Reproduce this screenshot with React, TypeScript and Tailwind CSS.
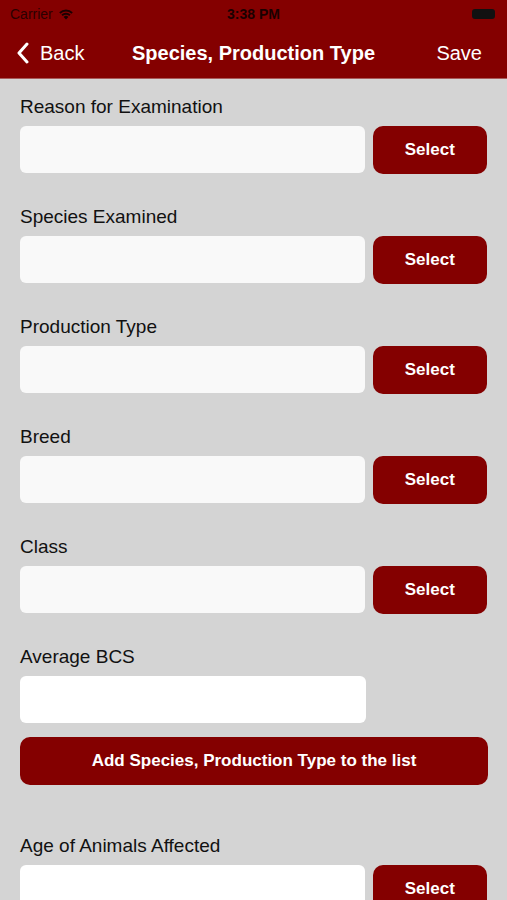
const fields = [
  { label: "Reason for Examination", select: true },
  { label: "Species Examined", select: true },
  { label: "Production Type", select: true },
  { label: "Breed", select: true },
  { label: "Class", select: true },
];

const Field = ({ label, select, white }: { label: string; select: boolean; white?: boolean }) => (
  <div>
    <p className="text-[19px] leading-[22px] text-[#111]">{label}</p>
    <div className="flex gap-[8px] mt-[8px] h-[48px]">
      <div className={`w-[346px] h-[47px] rounded-[6px] ${white ? "bg-white" : "bg-[#f9f9f9]"}`} />
      {select && (
        <button className="w-[115px] h-[48px] rounded-[10px] bg-[#840000] text-white font-bold text-[17px]">
          Select
        </button>
      )}
    </div>
  </div>
);

const App = () => {
  return (
    <div className="w-[507px] h-[900px] overflow-hidden bg-[#d4d4d4]" style={{ fontFamily: '"Liberation Sans", Arial, sans-serif' }}>
      <div className="bg-[#840000] border-b border-[#a85a5a]">
        <div className="h-[28px] flex items-center justify-between px-[10px] relative">
          <div className="flex items-center gap-[5px] text-[#2a0000] text-[14px]">
            <span>Carrier</span>
            <svg width="16" height="12" viewBox="0 0 16 12" fill="#1a0000">
              <path d="M8 11.5 L5.6 8.9 A3.4 3.4 0 0 1 10.4 8.9 Z" />
              <path d="M3.4 6.6 A6.6 6.6 0 0 1 12.6 6.6 L11.3 8 A4.7 4.7 0 0 0 4.7 8 Z" />
              <path d="M1.2 4.3 A9.8 9.8 0 0 1 14.8 4.3 L13.5 5.7 A7.9 7.9 0 0 0 2.5 5.7 Z" />
            </svg>
          </div>
          <span className="absolute left-1/2 -translate-x-1/2 text-[#1a0000] text-[14px] font-bold">3:38 PM</span>
          <div className="w-[23px] h-[10px] rounded-[3px] bg-[#111] mr-[2px]" />
        </div>
        <div className="h-[50px] flex items-center justify-between px-[16px] relative text-white text-[20px]">
          <div className="flex items-center gap-[10px]">
            <svg width="14" height="22" viewBox="0 0 14 22" fill="none" stroke="white" strokeWidth="3" strokeLinecap="round" strokeLinejoin="round">
              <path d="M11 2 L3 11 L11 20" />
            </svg>
            <span>Back</span>
          </div>
          <span className="absolute left-1/2 -translate-x-1/2 font-bold">Species, Production Type</span>
          <span className="mr-[9px]">Save</span>
        </div>
      </div>
      <div className="px-[20px] pt-[17px] flex flex-col gap-[32px]">
        {fields.map((f, idx) => (
          <Field key={idx} label={f.label} select={f.select} />
        ))}
        <div>
          <Field label="Average BCS" select={false} white />
          <button className="mt-[13px] w-[468px] h-[48px] rounded-[10px] bg-[#840000] text-white font-bold text-[17px]">
            Add Species, Production Type to the list
          </button>
        </div>
        <div className="mt-[18px]">
          <Field label="Age of Animals Affected" select white />
        </div>
      </div>
    </div>
  );
};

export default App;
